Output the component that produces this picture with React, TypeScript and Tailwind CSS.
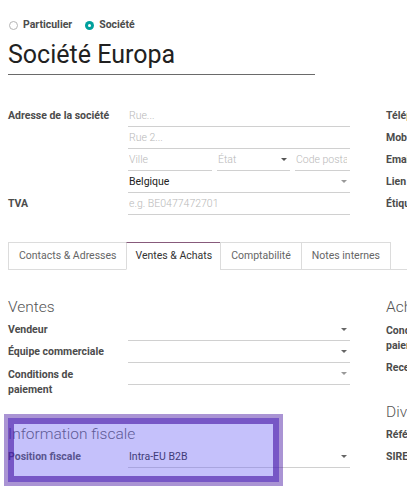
import type { ReactNode } from 'react'

const Caret = ({ color = '#666' }: { color?: string }) => (
    <svg width="6" height="3" viewBox="0 0 6 3" className="shrink-0">
        <path d="M0 0h6L3 3z" fill={color} />
    </svg>
)

const Label = ({ children }: { children: ReactNode }) => (
    <div className="w-[120px] shrink-0 pr-2 h-[22px] flex items-center font-bold text-[#4c4c4c]">{children}</div>
)

const Field = ({ children, caret, caretColor, className = '' }: { children?: ReactNode; caret?: boolean; caretColor?: string; className?: string }) => (
    <div className={`min-w-0 h-[22px] flex items-center border-b border-[#d0d0d0] pl-[1px] pr-[3px] ${className}`}>
        <div className="flex-1 min-w-0 overflow-hidden whitespace-nowrap">{children}</div>
        {caret && <Caret color={caretColor} />}
    </div>
)

const Ph = ({ children }: { children: ReactNode }) => (
    <span className="font-light text-[#b8b8b8]">{children}</span>
)

function Radio({ checked, label }: { checked?: boolean; label: string }) {
    return (
        <div className="flex items-center gap-[5px]">
            {checked ? (
                <span className="w-[9px] h-[9px] rounded-full bg-[#00a09d] flex items-center justify-center">
                    <span className="w-[3px] h-[3px] rounded-full bg-white" />
                </span>
            ) : (
                <span className="w-[9px] h-[9px] rounded-full border border-[#b5b5b5] bg-white" />
            )}
            <span className="font-bold text-[#4c4c4c]">{label}</span>
        </div>
    )
}

const Heading = ({ children, className = '' }: { children: ReactNode; className?: string }) => (
    <div className={`h-[24px] leading-[24px] text-[15.5px] font-light text-[#555] whitespace-nowrap ${className}`}>{children}</div>
)

export default function App() {
    const tabs = ['Contacts & Adresses', 'Ventes & Achats', 'Comptabilité', 'Notes internes']

    return (
        <div className="relative h-[486px] w-[407px] overflow-hidden bg-white">
            <div className="w-[760px] pl-2 pt-[19px] text-[10.5px] text-[#4c4c4c] font-['Roboto','Liberation_Sans',sans-serif]">
                {/* type de contact */}
                <div className="h-[12px] flex items-center gap-[13px] pl-[1px]">
                    <Radio label="Particulier" />
                    <Radio checked label="Société" />
                </div>

                {/* nom */}
                <div className="mt-[5px] w-[307px] h-[39px] border-b border-[#6a6a6a] text-[25px] leading-[38px] text-[#212121]">
                    Société Europa
                </div>

                {/* adresse + coordonnées */}
                <div className="mt-[30px] flex gap-[36px]">
                    <div className="w-[342px] shrink-0">
                        <div className="flex">
                            <Label>Adresse de la société</Label>
                            <div className="flex-1 min-w-0">
                                <Field><Ph>Rue...</Ph></Field>
                                <Field><Ph>Rue 2...</Ph></Field>
                                <div className="flex gap-[5px]">
                                    <Field className="w-[84px] shrink-0"><Ph>Ville</Ph></Field>
                                    <Field className="w-[73px] shrink-0" caret caretColor="#555"><Ph>État</Ph></Field>
                                    <Field className="flex-1 pr-0"><Ph>Code postal</Ph></Field>
                                </div>
                                <Field caret caretColor="#999"><span className="text-[#222]">Belgique</span></Field>
                            </div>
                        </div>
                        <div className="flex">
                            <Label>TVA</Label>
                            <Field className="flex-1"><Ph>e.g. BE0477472701</Ph></Field>
                        </div>
                    </div>
                    <div className="flex-1">
                        {['Téléphone', 'Mobile', 'Email', 'Lien du site web', 'Étiquettes'].map(l => (
                            <div key={l} className="flex">
                                <Label>{l}</Label>
                                <Field className="flex-1" />
                            </div>
                        ))}
                    </div>
                </div>

                {/* onglets */}
                <div className="mt-[27px] flex h-[28px] border-b border-[#dcdcdc]">
                    {tabs.map((t, i) => (
                        <div
                            key={t}
                            className={
                                i === 1
                                    ? '-mb-px -ml-px h-[28px] px-[8px] flex items-center bg-white border border-[#dcdcdc] border-t-[#875a7b] border-b-white text-[#333]'
                                    : '-mb-px -ml-px first:ml-0 h-[28px] px-[10px] flex items-center border border-[#dcdcdc] text-[#666]'
                            }
                        >
                            {t}
                        </div>
                    ))}
                </div>

                {/* ventes & achats */}
                <div className="mt-[25px] flex gap-[36px]">
                    <div className="w-[342px] shrink-0">
                        <Heading>Ventes</Heading>
                        <div className="flex">
                            <Label>Vendeur</Label>
                            <Field className="flex-1" caret />
                        </div>
                        <div className="flex">
                            <Label>Équipe commerciale</Label>
                            <Field className="flex-1" caret />
                        </div>
                        <div className="flex items-start">
                            <div className="w-[120px] shrink-0 pr-[30px] py-[4px] leading-[15px] font-bold text-[#4c4c4c]">Conditions de paiement</div>
                            <Field className="flex-1" caret caretColor="#999" />
                        </div>

                        <Heading className="mt-[21px]">Information fiscale</Heading>
                        <div className="flex">
                            <Label>Position fiscale</Label>
                            <Field className="flex-1" caret><span className="text-[#222]">Intra-EU B2B</span></Field>
                        </div>
                    </div>
                    <div className="flex-1">
                        <Heading>Achats</Heading>
                        <div className="flex items-start">
                            <div className="w-[120px] shrink-0 pr-[30px] py-[4px] leading-[15px] font-bold text-[#4c4c4c]">Conditions de paiement</div>
                            <Field className="flex-1" caret />
                        </div>
                        <div className="flex">
                            <Label>Recevoir un rappel</Label>
                            <Field className="flex-1" />
                        </div>
                        <Heading className="mt-[21px]">Divers</Heading>
                        <div className="flex">
                            <Label>Référence</Label>
                            <Field className="flex-1" />
                        </div>
                        <div className="flex">
                            <Label>SIRET</Label>
                            <Field className="flex-1" />
                        </div>
                    </div>
                </div>
            </div>

            {/* surbrillance */}
            <div className="absolute left-[4px] top-[414px] w-[279px] h-[72px] border-4 border-[rgba(66,17,160,0.45)]">
                <div className="h-full w-full border-[6px] border-[rgba(67,17,163,0.6)] bg-[rgba(110,100,245,0.4)]" />
            </div>
        </div>
    )
}
